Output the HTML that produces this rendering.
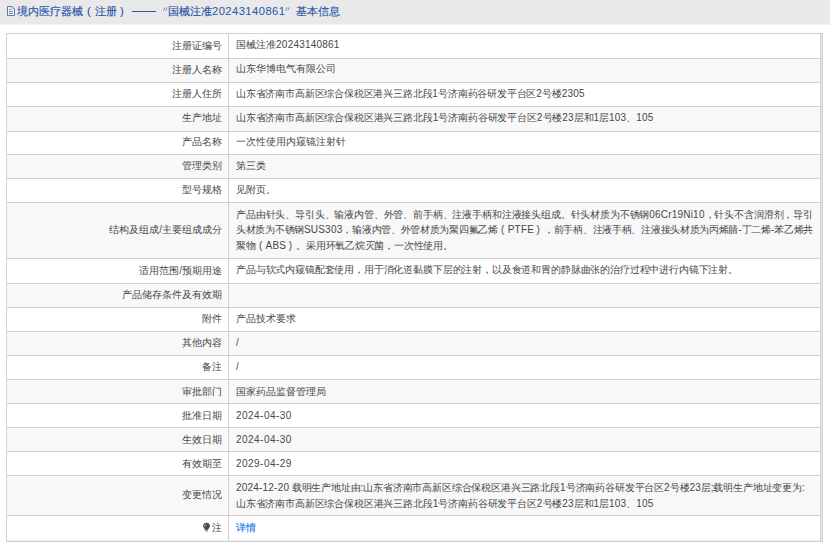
<!DOCTYPE html><html><head><meta charset="utf-8"><style>
*{margin:0;padding:0;box-sizing:border-box}
html,body{width:830px;height:545px;overflow:hidden;background:#fff}
body{font-family:"Liberation Sans",sans-serif;font-size:10px;color:#474747;position:relative}
.hdr{position:absolute;left:0;top:0;width:830px;height:24px;background:#e9e9eb;border-bottom:1px solid #f1f1f4;box-sizing:content-box}
.t{position:absolute;top:5px;font-size:11.2px;line-height:12px;color:#2756a3;white-space:nowrap;-webkit-text-stroke:0.15px #2756a3}
.ico{position:absolute;left:7px;top:6px;width:8px;height:10px}
.bg{position:absolute;left:6px;width:814px;background:#f8f8f8}
.hl{position:absolute;left:6px;width:814px;height:1px;background:#d2cfd2}
.vl{position:absolute;width:1px;background:#d2cfd2}
.lab{position:absolute;right:608px;white-space:nowrap;text-align:right;line-height:16px;height:16px}
.val{position:absolute;left:236px;white-space:nowrap;line-height:16px;height:16px}
.lk{color:#2d7fe6;-webkit-text-stroke:0.2px #2d7fe6}
.a{letter-spacing:0.2px}
.fp{display:inline-block;width:10px;text-align:center;letter-spacing:0}
.fpc{display:inline-block;width:10px;text-align:left;padding-left:2.5px;letter-spacing:0}
</style></head><body>
<div class="hdr"></div>
<svg class="ico" style="left:7px;top:6px;width:8px;height:10px" viewBox="0 0 8 10"><path d="M0.5 0.5H5L7.5 3V9.5H0.5Z" fill="#f2f4f9" stroke="#6577a0" stroke-width="1"/><path d="M5 0.5V3H7.5" fill="none" stroke="#8d9cbc" stroke-width="0.8"/><path d="M2 3.5H4M2 5.5H6M2 7.5H6" stroke="#7888ac" stroke-width="1"/></svg>
<div class="t" style="left:17px">境内医疗器械</div>
<div class="t" style="left:87px">(</div>
<div class="t" style="left:94.5px">注册</div>
<div class="t" style="left:120px">)</div>
<div class="t" style="left:132px;width:24px;height:1.3px;top:10.6px;background:#2756a3;-webkit-text-stroke:0"></div>
<svg style="position:absolute;left:162.5px;top:6.5px" width="5" height="4" viewBox="0 0 5 4"><path d="M0.6 3.6L1.8 0.4M2.8 3.6L4 0.4" stroke="#6a80ad" stroke-width="0.9"/></svg>
<div class="t" style="left:168px">国械注准<span style="letter-spacing:0.45px;-webkit-text-stroke:0">20243140861</span></div>
<svg style="position:absolute;left:284.5px;top:6.5px" width="5" height="4" viewBox="0 0 5 4"><path d="M0.6 3.6L1.8 0.4M2.8 3.6L4 0.4" stroke="#6a80ad" stroke-width="0.9"/></svg>
<div class="t" style="left:295.5px">基本信息</div>
<div class="bg" style="top:58px;height:24px"></div>
<div class="bg" style="top:106px;height:24.5px"></div>
<div class="bg" style="top:154px;height:24px"></div>
<div class="bg" style="top:202px;height:56px"></div>
<div class="bg" style="top:283px;height:24px"></div>
<div class="bg" style="top:331px;height:24px"></div>
<div class="bg" style="top:379px;height:24px"></div>
<div class="bg" style="top:427px;height:24px"></div>
<div class="bg" style="top:475px;height:40px"></div>
<div class="hl" style="top:33px;width:817px"></div>
<div class="hl" style="top:58px"></div>
<div class="hl" style="top:82px"></div>
<div class="hl" style="top:106px"></div>
<div class="hl" style="top:130.5px"></div>
<div class="hl" style="top:154px"></div>
<div class="hl" style="top:178px"></div>
<div class="hl" style="top:202px"></div>
<div class="hl" style="top:258px"></div>
<div class="hl" style="top:283px"></div>
<div class="hl" style="top:307px"></div>
<div class="hl" style="top:331px"></div>
<div class="hl" style="top:355px"></div>
<div class="hl" style="top:379px"></div>
<div class="hl" style="top:403px"></div>
<div class="hl" style="top:427px"></div>
<div class="hl" style="top:451px"></div>
<div class="hl" style="top:475px"></div>
<div class="hl" style="top:515px"></div>
<div class="hl" style="top:541px;width:817px"></div>
<div class="vl" style="left:6px;top:33px;height:509px"></div>
<div class="vl" style="left:228px;top:33px;height:507px"></div>
<div style="position:absolute;left:7px;top:540px;width:813px;height:1px;background:#f0eff2"></div>
<div style="position:absolute;left:820px;top:33px;width:3px;height:509px;background:#d2d0d4"></div>
<div style="position:absolute;left:821px;top:34px;width:1px;height:507px;background:#e8e8ec"></div>
<div class="lab" style="top:37.5px">注册证编号</div>
<div class="lab" style="top:62.0px">注册人名称</div>
<div class="lab" style="top:86.0px">注册人住所</div>
<div class="lab" style="top:110.25px">生产地址</div>
<div class="lab" style="top:134.25px">产品名称</div>
<div class="lab" style="top:158.0px">管理类别</div>
<div class="lab" style="top:182.0px">型号规格</div>
<div class="lab" style="top:222.0px">结构及组成/主要组成成分</div>
<div class="lab" style="top:262.5px">适用范围/预期用途</div>
<div class="lab" style="top:287.0px">产品储存条件及有效期</div>
<div class="lab" style="top:311.0px">附件</div>
<div class="lab" style="top:335.0px">其他内容</div>
<div class="lab" style="top:359.0px">备注</div>
<div class="lab" style="top:383.7px">审批部门</div>
<div class="lab" style="top:407.7px">批准日期</div>
<div class="lab" style="top:431.7px">生效日期</div>
<div class="lab" style="top:455.7px">有效期至</div>
<div class="lab" style="top:487.0px">变更情况</div>
<div class="lab" style="top:520.0px"><svg width="9" height="10" viewBox="0 0 9 10" style="vertical-align:-1px;margin-right:1px"><path d="M4.5 0.8C2.4 0.8 1 2.3 1 4.1C1 5.6 2.2 6.4 2.8 7.2V8.2H6.2V7.2C6.8 6.4 8 5.6 8 4.1C8 2.3 6.6 0.8 4.5 0.8Z" fill="#4d4f55"/><path d="M2.4 4.6C2.4 3.4 2.9 2.6 3.8 2.2" fill="none" stroke="#c9cbd0" stroke-width="0.9"/><rect x="3.2" y="8.6" width="2.6" height="1" fill="#8a8c90"/></svg>注</div>
<div class="val" id="v0" style="top:36.8px;letter-spacing:0.025px">国械注准<span class="a">20243140861</span></div>
<div class="val" id="v1" style="top:61.3px">山东华博电气有限公司</div>
<div class="val" id="v2" style="top:85.5px;letter-spacing:-0.184px">山东省济南市高新区综合保税区港兴三路北段<span class="a">1</span>号济南药谷研发平台区<span class="a">2</span>号楼<span class="a">2305</span></div>
<div class="val" id="v3" style="top:110.0px;letter-spacing:-0.167px">山东省济南市高新区综合保税区港兴三路北段<span class="a">1</span>号济南药谷研发平台区<span class="a">2</span>号楼<span class="a">23</span>层和<span class="a">1</span>层<span class="a">103</span>、<span class="a">105</span></div>
<div class="val" id="v4" style="top:134.0px">一次性使用内窥镜注射针</div>
<div class="val" id="v5" style="top:158.0px">第三类</div>
<div class="val" id="v6" style="top:182.0px">见附页。</div>
<div class="val" id="v7" style="top:207.3px;letter-spacing:-0.160px">产品由针头、导引头、输液内管、外管、前手柄、注液手柄和注液接头组成。针头材质为不锈钢<span class="a">06Cr19Ni10</span>，针头不含润滑剂，导引</div>
<div class="val" id="v8" style="top:222.3px;letter-spacing:-0.294px">头材质为不锈钢<span class="a">SUS303</span>，输液内管、外管材质为聚四氟乙烯<span class="fp">(</span><span class="a">PTFE</span><span class="fpc">)</span>，前手柄、注液手柄、注液接头材质为丙烯腈<span class="a">-</span>丁二烯<span class="a">-</span>苯乙烯共</div>
<div class="val" id="v9" style="top:238.3px;letter-spacing:-0.222px">聚物<span class="fp">(</span><span class="a">ABS</span><span class="fpc">)</span>。采用环氧乙烷灭菌，一次性使用。</div>
<div class="val" id="v10" style="top:262.3px;letter-spacing:-0.157px">产品与软式内窥镜配套使用，用于消化道黏膜下层的注射，以及食道和胃的静脉曲张的治疗过程中进行内镜下注射。</div>
<div class="val" id="v11" style="top:311.0px">产品技术要求</div>
<div class="val" id="v12" style="top:335.0px">/</div>
<div class="val" id="v13" style="top:359.0px">/</div>
<div class="val" id="v14" style="top:383.7px">国家药品监督管理局</div>
<div class="val" id="v15" style="top:407.8px;letter-spacing:0.460px">2024-04-30</div>
<div class="val" id="v16" style="top:431.8px;letter-spacing:0.460px">2024-04-30</div>
<div class="val" id="v17" style="top:456.0px;letter-spacing:0.460px">2029-04-29</div>
<div class="val" id="v18" style="top:479.8px;letter-spacing:-0.166px"><span class="a">2024-12-20</span> 载明生产地址由:山东省济南市高新区综合保税区港兴三路北段<span class="a">1</span>号济南药谷研发平台区<span class="a">2</span>号楼<span class="a">23</span>层;载明生产地址变更为:</div>
<div class="val" id="v19" style="top:495.5px;letter-spacing:-0.167px">山东省济南市高新区综合保税区港兴三路北段<span class="a">1</span>号济南药谷研发平台区<span class="a">2</span>号楼<span class="a">23</span>层和<span class="a">1</span>层<span class="a">103</span>、<span class="a">105</span></div>
<div class="val" id="v20" style="top:519.8px"><span class="lk">详情</span></div>
</body></html>
